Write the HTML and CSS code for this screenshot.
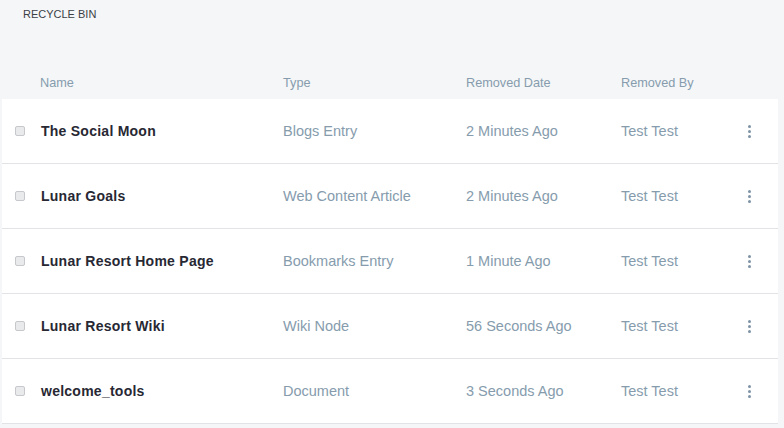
FILE: index.html
```
<!DOCTYPE html>
<html>
<head>
<meta charset="utf-8">
<link rel="stylesheet" href="styles.css">
</head>
<body>
<div class="page">
  <div class="title">RECYCLE BIN</div>
  <div class="table">
    <div class="head">
      <div class="c-check"></div>
      <div class="c-name">Name</div>
      <div class="c-type">Type</div>
      <div class="c-date">Removed Date</div>
      <div class="c-by">Removed By</div>
      <div class="c-act"></div>
    </div>
    <div class="row">
      <div class="c-check"><span class="cb"></span></div>
      <div class="c-name name">The Social Moon</div>
      <div class="c-type">Blogs Entry</div>
      <div class="c-date">2 Minutes Ago</div>
      <div class="c-by">Test Test</div>
      <div class="c-act"><span class="kebab"><i></i><i></i><i></i></span></div>
    </div>
    <div class="row">
      <div class="c-check"><span class="cb"></span></div>
      <div class="c-name name">Lunar Goals</div>
      <div class="c-type">Web Content Article</div>
      <div class="c-date">2 Minutes Ago</div>
      <div class="c-by">Test Test</div>
      <div class="c-act"><span class="kebab"><i></i><i></i><i></i></span></div>
    </div>
    <div class="row">
      <div class="c-check"><span class="cb"></span></div>
      <div class="c-name name">Lunar Resort Home Page</div>
      <div class="c-type">Bookmarks Entry</div>
      <div class="c-date">1 Minute Ago</div>
      <div class="c-by">Test Test</div>
      <div class="c-act"><span class="kebab"><i></i><i></i><i></i></span></div>
    </div>
    <div class="row">
      <div class="c-check"><span class="cb"></span></div>
      <div class="c-name name">Lunar Resort Wiki</div>
      <div class="c-type">Wiki Node</div>
      <div class="c-date">56 Seconds Ago</div>
      <div class="c-by">Test Test</div>
      <div class="c-act"><span class="kebab"><i></i><i></i><i></i></span></div>
    </div>
    <div class="row">
      <div class="c-check"><span class="cb"></span></div>
      <div class="c-name name">welcome_tools</div>
      <div class="c-type">Document</div>
      <div class="c-date">3 Seconds Ago</div>
      <div class="c-by">Test Test</div>
      <div class="c-act"><span class="kebab"><i></i><i></i><i></i></span></div>
    </div>
  </div>
</div>
</body>
</html>
```
FILE: styles.css
```
* { box-sizing: border-box; }
html, body { margin: 0; padding: 0; }
body {
  background: #f5f6f8;
  font-family: "Liberation Sans", Arial, sans-serif;
  width: 784px;
  height: 428px;
  overflow: hidden;
}
.page { padding: 0 6px 0 2px; }
.title {
  font-size: 11px;
  color: #3b3f46;
  padding: 8px 0 0 21px;
  height: 65px;
  line-height: 12px;
}
.head {
  display: flex;
  align-items: center;
  height: 34px;
  font-size: 12.7px;
  color: #869cad;
  padding-top: 2px;
}
.row {
  display: flex;
  align-items: center;
  height: 65px;
  background: #fff;
  border-bottom: 1px solid #e2e3e6;
  font-size: 14.5px;
  color: #869cad;
}
.c-check { width: 38px; padding-left: 13px; display: flex; align-items: center; }
.c-name { width: 243px; }
.c-name.name { padding-left: 1px; }
.c-type { width: 183px; }
.c-date { width: 155px; }
.c-by { width: 120px; }
.c-act { flex: 1; display: flex; justify-content: flex-start; padding-left: 7px; }
.name {
  font-weight: bold;
  color: #272833;
  font-size: 14px;
  letter-spacing: 0.25px;
}
.cb {
  display: block;
  width: 10px;
  height: 10px;
  border: 1px solid #c7c8cb;
  border-radius: 2px;
  background: #e9eaec;
}
.kebab { display: flex; flex-direction: column; gap: 2px; }
.kebab i {
  display: block;
  width: 3px;
  height: 3px;
  border-radius: 50%;
  background: #7d93a5;
}
```
